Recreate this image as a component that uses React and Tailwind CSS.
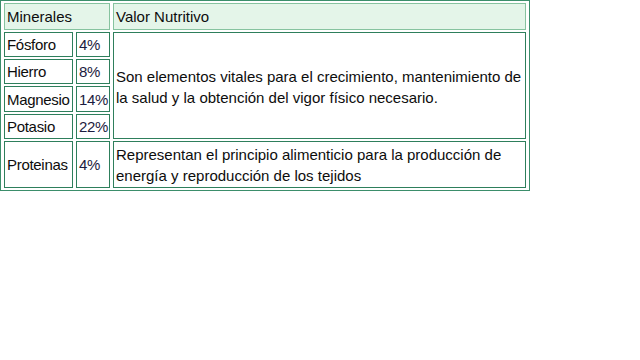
import React from "react";

const minerales = [
  { name: "Fósforo", pct: "4%", h: "h-[25px]" },
  { name: "Hierro", pct: "8%", h: "h-[25px]" },
  { name: "Magnesio", pct: "14%", h: "h-[26px]" },
  { name: "Potasio", pct: "22%", h: "h-[25px]" },
];

const cell = "border border-[#2e7f5c] px-[2px] py-0 align-middle";
const name = `${cell} tracking-[-0.3px] whitespace-nowrap`;
const pct = `${cell} px-[1px] tracking-[-0.3px] text-[#1c1c40] whitespace-nowrap`;
const head = "border border-[#86c39f] bg-[#e4f5e9] px-[2px] py-0 text-left font-normal align-middle h-[27px]";

export default function App() {
  return (
    <div className="w-[640px] h-[360px] bg-white font-['Liberation_Sans',Arial,sans-serif] text-[15px] leading-[21px] text-[#0d0d0d]">
      <table className="table-fixed w-[530px] border border-[#3b8e6b] border-separate border-spacing-x-[3px] border-spacing-y-[2px]">
        <colgroup>
          <col className="w-[69px]" />
          <col className="w-[34px]" />
          <col />
        </colgroup>
        <thead>
          <tr>
            <th colSpan={2} className={head}>Minerales</th>
            <th className={head}>Valor Nutritivo</th>
          </tr>
        </thead>
        <tbody>
          {minerales.map((m, i) => (
            <tr key={m.name}>
              <td className={`${name} ${m.h}`}>{m.name}</td>
              <td className={`${pct} ${m.h}`}>{m.pct}</td>
              {i === 0 && (
                <td rowSpan={4} className={`${cell} pt-[3px]`}>
                  Son elementos vitales para el crecimiento, mantenimiento de la salud y la obtención del vigor físico necesario.
                </td>
              )}
            </tr>
          ))}
          <tr>
            <td className={`${name} h-[47px]`}>Proteinas</td>
            <td className={pct}>4%</td>
            <td className={cell}>
              Representan el principio alimenticio para la producción de energía y reproducción de los tejidos
            </td>
          </tr>
        </tbody>
      </table>
    </div>
  );
}
